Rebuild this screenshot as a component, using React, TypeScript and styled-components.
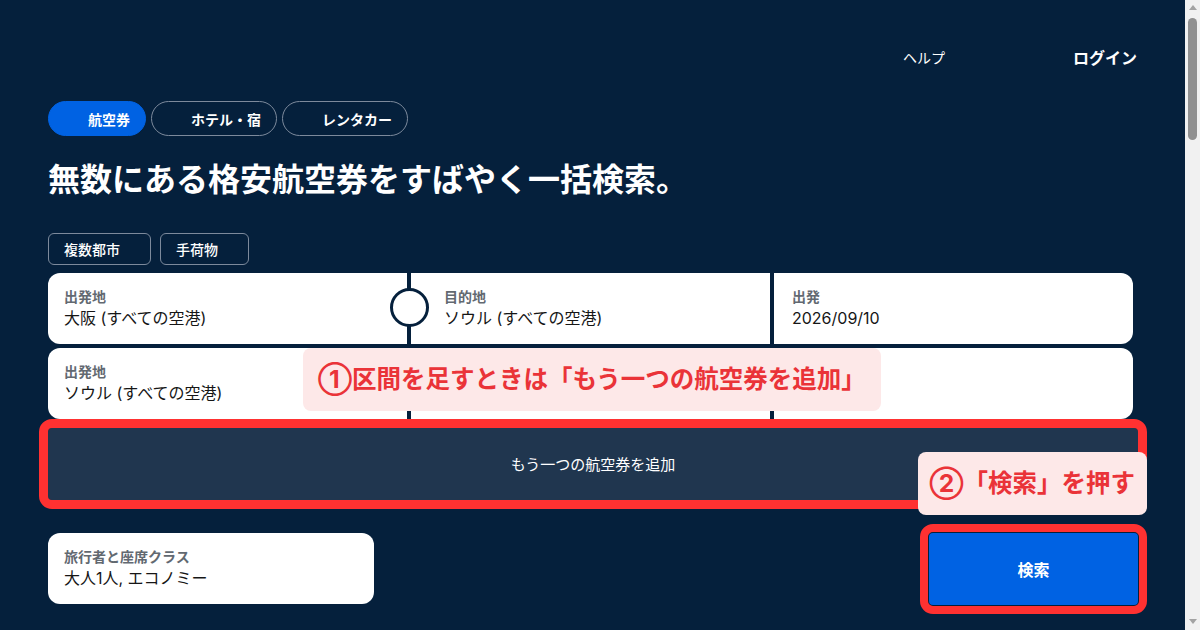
import React from 'react';
import styled, { createGlobalStyle } from 'styled-components';

const GlobalStyle = createGlobalStyle`
  body {
    margin: 0;
    background: #05203c;
    font-family: Inter, 'Noto Sans CJK JP', sans-serif;
    color: #ffffff;
  }
`;

const Shell = styled.div`
  display: flex;
  height: 100vh;
  overflow: hidden;
`;

const Page = styled.main`
  flex: 1;
  padding: 48px 47px 0 48px;
  background: #05203c;
`;

// window scrollbar as it appears in the screenshot
const ScrollRail = styled.div`
  width: 15px;
  flex-shrink: 0;
  display: flex;
  flex-direction: column;
  align-items: center;
  background: #f1f1f1;
`;

const Arrow = styled.div<{ $down?: boolean }>`
  width: 0;
  height: 0;
  margin: ${p => (p.$down ? 'auto 0 6px' : '5px 0 0')};
  border-left: 4px solid transparent;
  border-right: 4px solid transparent;
  ${p => (p.$down ? 'border-top: 5px solid #a3a3a3;' : 'border-bottom: 5px solid #a3a3a3;')}
`;

const Thumb = styled.div`
  width: 9px;
  height: 122px;
  margin-top: 8px;
  border-radius: 5px;
  background: #909090;
`;

const TopBar = styled.header`
  display: flex;
  justify-content: flex-end;
  align-items: center;
  gap: 128px;
  padding-right: 1px;
  height: 20px;
`;

const NavLink = styled.a<{ $bold?: boolean }>`
  color: #ffffff;
  text-decoration: none;
  font-size: ${p => (p.$bold ? '16px' : '14px')};
  font-weight: ${p => (p.$bold ? 700 : 400)};
  line-height: 20px;
`;

const Tabs = styled.nav`
  display: flex;
  gap: 5px;
  margin-top: 33px;
`;

const Tab = styled.button<{ $active?: boolean }>`
  height: 35px;
  padding: 0 15px 0 39px;
  border-radius: 18px;
  border: 1px solid ${p => (p.$active ? '#0062e3' : '#7d8a9c')};
  background: ${p => (p.$active ? '#0062e3' : 'transparent')};
  color: #ffffff;
  font-family: inherit;
  font-size: 14px;
  font-weight: 700;
  cursor: pointer;
`;

const Title = styled.h1`
  margin: 24px 0 0;
  font-size: 32px;
  line-height: 40px;
  font-weight: 700;
`;

const Chips = styled.div`
  display: flex;
  gap: 9px;
  margin-top: 33px;
`;

const Chip = styled.button`
  height: 32px;
  padding: 0 30px 0 15px;
  border: 1px solid #7d8a9c;
  border-radius: 6px;
  background: transparent;
  color: #ffffff;
  font-family: inherit;
  font-size: 14px;
  font-weight: 500;
`;

const Legs = styled.div`
  position: relative;
  display: flex;
  flex-direction: column;
  gap: 4px;
  margin: 8px 5px 0 0;
`;

const LegRow = styled.div`
  position: relative;
  display: grid;
  grid-template-columns: 1fr 1fr 1fr;
  gap: 4px;
`;

const Field = styled.div`
  background: #ffffff;
  padding: 15px 16px 14px;
  min-height: 42px;
`;

const LegField = styled(Field)`
  &:nth-child(1) {
    border-radius: 12px 0 0 12px;
  }
  &:nth-child(2) {
    padding-left: 33px;
  }
  &:nth-child(3) {
    padding-left: 18px;
    border-radius: 0 12px 12px 0;
  }
`;

const Label = styled.div`
  font-size: 14px;
  line-height: 18px;
  font-weight: 600;
  color: #626971;
`;

const Value = styled.div`
  font-size: 16px;
  line-height: 24px;
  color: #161616;
`;

const SwapButton = styled.div`
  position: absolute;
  left: calc(33.333% - 20px);
  top: 15px;
  width: 33px;
  height: 33px;
  border-radius: 50%;
  background: #ffffff;
  border: 3px solid #05203c;
`;

const Callout = styled.div`
  position: absolute;
  z-index: 2;
  background: #fde8e8;
  color: #ea3338;
  border-radius: 8px;
  font-size: 24.5px;
  font-weight: 700;
  line-height: 33px;
  white-space: nowrap;
`;

const CalloutAdd = styled(Callout)`
  left: 255px;
  top: 75px;
  padding: 15px;
`;

const CalloutSearch = styled(Callout)`
  right: -9px;
  top: 24px;
  padding: 15px 12px 15px 11px;
`;

const Actions = styled.div`
  position: relative;
  margin-top: 9px;
`;

const AddLegButton = styled.button`
  display: flex;
  align-items: center;
  justify-content: center;
  width: 100%;
  height: 72px;
  padding-bottom: 3px;
  border: none;
  border-radius: 4px;
  background: #20364f;
  color: #ffffff;
  font-family: inherit;
  font-size: 15px;
  outline: 9px solid #ff3131;
  outline-offset: 0;
`;

const BottomRow = styled.div`
  display: flex;
  justify-content: space-between;
  align-items: flex-start;
  margin-top: 33px;
`;

const TravellerCard = styled(Field)`
  width: 294px;
  border-radius: 12px;
`;

const SearchButton = styled.button`
  width: 209px;
  height: 72px;
  border: none;
  border-radius: 4px;
  background: #0062e3;
  color: #ffffff;
  font-family: inherit;
  font-size: 16px;
  font-weight: 700;
  outline: 8px solid #ff3131;
  outline-offset: 1px;
`;

type Leg = { from: string; to?: string; date?: string };

const legs: Leg[] = [
  { from: '大阪 (すべての空港)', to: 'ソウル (すべての空港)', date: '2026/09/10' },
  { from: 'ソウル (すべての空港)' },
];

function App() {
  return (
    <>
      <GlobalStyle />
      <Shell>
        <Page>
          <TopBar>
            <NavLink>ヘルプ</NavLink>
            <NavLink $bold>ログイン</NavLink>
          </TopBar>

          <Tabs>
            <Tab $active>航空券</Tab>
            <Tab>ホテル・宿</Tab>
            <Tab>レンタカー</Tab>
          </Tabs>

          <Title>無数にある格安航空券をすばやく一括検索。</Title>

          <Chips>
            <Chip>複数都市</Chip>
            <Chip>手荷物</Chip>
          </Chips>

          <Legs>
            {legs.map((leg, i) => (
              <LegRow key={i}>
                <LegField>
                  <Label>出発地</Label>
                  <Value>{leg.from}</Value>
                </LegField>
                <LegField>
                  {leg.to && (
                    <>
                      <Label>目的地</Label>
                      <Value>{leg.to}</Value>
                    </>
                  )}
                </LegField>
                <LegField>
                  {leg.date && (
                    <>
                      <Label>出発</Label>
                      <Value>{leg.date}</Value>
                    </>
                  )}
                </LegField>
                {i === 0 && <SwapButton />}
              </LegRow>
            ))}
            <CalloutAdd>①区間を足すときは「もう一つの航空券を追加」</CalloutAdd>
          </Legs>

          <Actions>
            <AddLegButton>もう一つの航空券を追加</AddLegButton>
            <CalloutSearch>②「検索」を押す</CalloutSearch>
            <BottomRow>
              <TravellerCard>
                <Label>旅行者と座席クラス</Label>
                <Value>大人1人, エコノミー</Value>
              </TravellerCard>
              <SearchButton>検索</SearchButton>
            </BottomRow>
          </Actions>
        </Page>

        <ScrollRail>
          <Arrow />
          <Thumb />
          <Arrow $down />
        </ScrollRail>
      </Shell>
    </>
  );
}

export default App;
